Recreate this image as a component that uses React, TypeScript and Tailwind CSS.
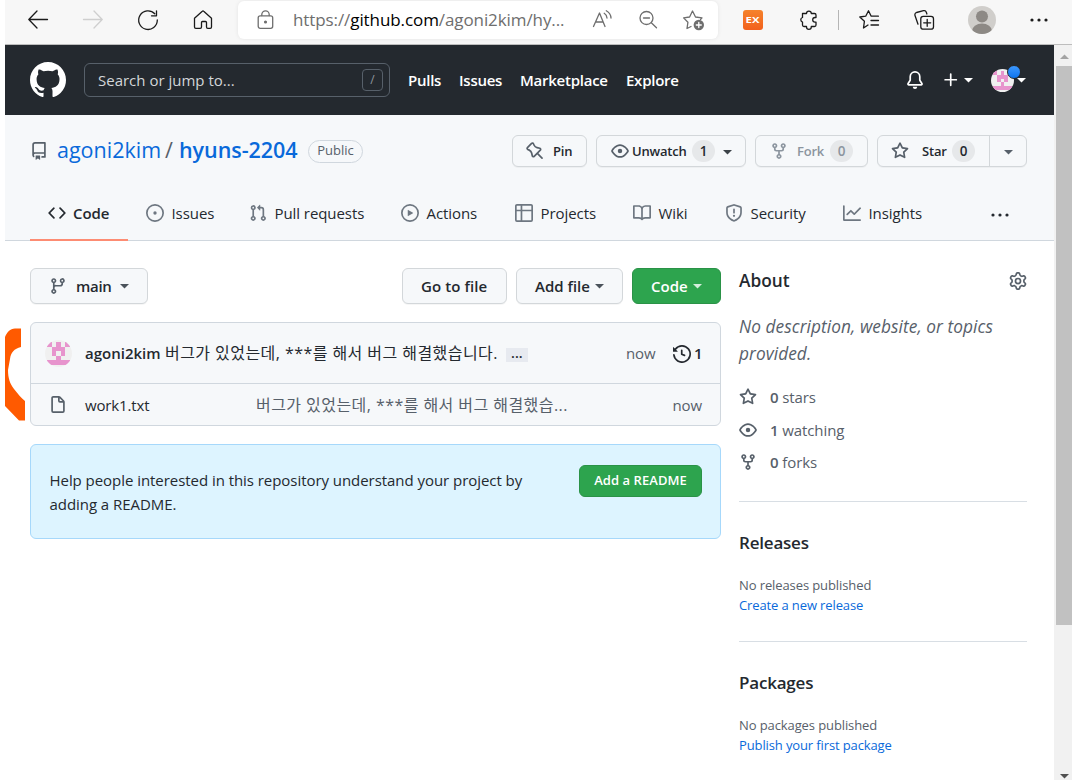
import type { ReactNode } from "react";
import clsx from "clsx";

// 16px octicon outlines
const icons = {
  mark: "M8 0C3.58 0 0 3.58 0 8c0 3.54 2.29 6.53 5.47 7.59.4.07.55-.17.55-.38 0-.19-.01-.82-.01-1.49-2.01.37-2.53-.49-2.69-.94-.09-.23-.48-.94-.82-1.13-.28-.15-.68-.52-.01-.53.63-.01 1.08.58 1.23.82.72 1.21 1.87.87 2.33.66.07-.52.28-.87.51-1.07-1.78-.2-3.64-.89-3.64-3.95 0-.87.31-1.59.82-2.15-.08-.2-.36-1.02.08-2.12 0 0 .67-.21 2.2.82.64-.18 1.32-.27 2-.27.68 0 1.36.09 2 .27 1.53-1.04 2.2-.82 2.2-.82.44 1.1.16 1.92.08 2.12.51.56.82 1.27.82 2.15 0 3.07-1.87 3.75-3.65 3.95.29.25.54.73.54 1.48 0 1.07-.01 1.93-.01 2.2 0 .21.15.46.55.38A8.013 8.013 0 0016 8c0-4.42-3.58-8-8-8z",
  repo: "M2 2.5A2.5 2.5 0 014.5 0h8.75a.75.75 0 01.75.75v12.5a.75.75 0 01-.75.75h-2.5a.75.75 0 110-1.5h1.75v-2h-8a1 1 0 00-.714 1.7.75.75 0 01-1.072 1.05A2.495 2.495 0 012 11.5v-9zm10.5-1V9h-8c-.356 0-.694.074-1 .208V2.5a1 1 0 011-1h8zM5 12.25v3.25a.25.25 0 00.4.2l1.45-1.087a.25.25 0 01.3 0L8.6 15.7a.25.25 0 00.4-.2v-3.25a.25.25 0 00-.25-.25h-3.5a.25.25 0 00-.25.25z",
  code: "M4.72 3.22a.75.75 0 011.06 1.06L2.06 8l3.72 3.72a.75.75 0 11-1.06 1.06L.47 8.53a.75.75 0 010-1.06l4.25-4.25zm6.56 0a.75.75 0 10-1.06 1.06L13.94 8l-3.72 3.72a.75.75 0 101.06 1.06l4.25-4.25a.75.75 0 000-1.06l-4.25-4.25z",
  issue: "M8 9.5a1.5 1.5 0 100-3 1.5 1.5 0 000 3zM8 0a8 8 0 100 16A8 8 0 008 0zM1.5 8a6.5 6.5 0 1113 0 6.5 6.5 0 01-13 0z",
  pull: "M7.177 3.073L9.573.677A.25.25 0 0110 .854v4.792a.25.25 0 01-.427.177L7.177 3.427a.25.25 0 010-.354zM3.75 2.5a.75.75 0 100 1.5.75.75 0 000-1.5zm-2.25.75a2.25 2.25 0 113 2.122v5.256a2.251 2.251 0 11-1.5 0V5.372A2.25 2.25 0 011.5 3.25zM11 2.5h-1V4h1a1 1 0 011 1v5.628a2.251 2.251 0 101.5 0V5A2.5 2.5 0 0011 2.5zm1 10.25a.75.75 0 111.5 0 .75.75 0 01-1.5 0zM3.75 12a.75.75 0 100 1.5.75.75 0 000-1.5z",
  play: "M1.5 8a6.5 6.5 0 1113 0 6.5 6.5 0 01-13 0zM8 0a8 8 0 100 16A8 8 0 008 0zM6.379 5.227A.25.25 0 006 5.442v5.117a.25.25 0 00.379.214l4.264-2.559a.25.25 0 000-.428L6.379 5.227z",
  table: "M0 1.75C0 .784.784 0 1.75 0h12.5C15.216 0 16 .784 16 1.75v3.585a.746.746 0 010 .83v8.085A1.75 1.75 0 0114.25 16H6.309a.748.748 0 01-1.118 0H1.75A1.75 1.75 0 010 14.25V6.165a.746.746 0 010-.83V1.75zM1.5 6.5v7.75c0 .138.112.25.25.25H5v-8H1.5zM5 5H1.5V1.75a.25.25 0 01.25-.25H5V5zm1.5 1.5v8h7.75a.25.25 0 00.25-.25V6.5h-8zm8-1.5h-8V1.5h7.75a.25.25 0 01.25.25V5z",
  book: "M0 1.75A.75.75 0 01.75 1h4.253c1.227 0 2.317.59 3 1.501A3.744 3.744 0 0111.006 1h4.245a.75.75 0 01.75.75v10.5a.75.75 0 01-.75.75h-4.507a2.25 2.25 0 00-1.591.659l-.622.621a.75.75 0 01-1.06 0l-.622-.621A2.25 2.25 0 005.258 13H.75a.75.75 0 01-.75-.75V1.75zm8.755 3a2.25 2.25 0 012.25-2.25H14.5v9h-3.757c-.71 0-1.4.201-1.992.572l.004-7.322zm-1.504 7.324l.004-5.073-.002-2.253A2.25 2.25 0 005.003 2.5H1.5v9h3.757a3.75 3.75 0 011.994.574z",
  shield: "M7.467.133a1.75 1.75 0 011.066 0l5.25 1.68A1.75 1.75 0 0115 3.48V7c0 1.566-.32 3.182-1.303 4.682-.983 1.498-2.585 2.813-5.032 3.855a1.7 1.7 0 01-1.33 0c-2.447-1.042-4.049-2.357-5.032-3.855C1.32 10.182 1 8.566 1 7V3.48a1.75 1.75 0 011.217-1.667l5.25-1.68zm.61 1.429a.25.25 0 00-.153 0l-5.25 1.68a.25.25 0 00-.174.238V7c0 1.358.275 2.666 1.057 3.86.784 1.194 2.121 2.34 4.366 3.297a.2.2 0 00.154 0c2.245-.956 3.582-2.104 4.366-3.298C13.225 9.666 13.5 8.36 13.5 7V3.48a.25.25 0 00-.174-.237l-5.25-1.68zM9 10.5a1 1 0 11-2 0 1 1 0 012 0zm-.25-5.75a.75.75 0 10-1.5 0v3a.75.75 0 001.5 0v-3z",
  graph: "M1.5 1.75a.75.75 0 00-1.5 0v12.5c0 .414.336.75.75.75h14.5a.75.75 0 000-1.5H1.5V1.75zm14.28 2.53a.75.75 0 00-1.06-1.06L10 7.94 7.53 5.47a.75.75 0 00-1.06 0L3.22 8.72a.75.75 0 001.06 1.06L7 7.06l2.47 2.47a.75.75 0 001.06 0l5.25-5.25z",
  eye: "M1.679 7.932c.412-.621 1.242-1.75 2.366-2.717C5.175 4.242 6.527 3.5 8 3.5c1.473 0 2.824.742 3.955 1.715 1.124.967 1.954 2.096 2.366 2.717a.119.119 0 010 .136c-.412.621-1.242 1.75-2.366 2.717C10.825 11.758 9.473 12.5 8 12.5c-1.473 0-2.824-.742-3.955-1.715C2.92 9.818 2.09 8.69 1.679 8.068a.119.119 0 010-.136zM8 2c-1.981 0-3.67.992-4.933 2.078C1.797 5.169.88 6.423.43 7.1a1.619 1.619 0 000 1.798c.45.678 1.367 1.932 2.637 3.024C4.329 13.008 6.019 14 8 14c1.981 0 3.67-.992 4.933-2.078 1.27-1.091 2.187-2.345 2.637-3.023a1.619 1.619 0 000-1.798c-.45-.678-1.367-1.932-2.637-3.023C11.671 2.992 9.981 2 8 2zm0 8a2 2 0 100-4 2 2 0 000 4z",
  fork: "M5 3.25a.75.75 0 11-1.5 0 .75.75 0 011.5 0zm0 2.122a2.25 2.25 0 10-1.5 0v.878A2.25 2.25 0 005.75 8.5h1.5v2.128a2.251 2.251 0 101.5 0V8.5h1.5a2.25 2.25 0 002.25-2.25v-.878a2.25 2.25 0 10-1.5 0v.878a.75.75 0 01-.75.75h-4.5A.75.75 0 015 6.25v-.878zm3.75 7.378a.75.75 0 11-1.5 0 .75.75 0 011.5 0zm3-8.75a.75.75 0 100-1.5.75.75 0 000 1.5z",
  star: "M8 .25a.75.75 0 01.673.418l1.882 3.815 4.21.612a.75.75 0 01.416 1.279l-3.046 2.97.719 4.192a.75.75 0 01-1.088.791L8 12.347l-3.766 1.98a.75.75 0 01-1.088-.79l.72-4.194L.818 6.374a.75.75 0 01.416-1.28l4.21-.611L7.327.668A.75.75 0 018 .25zm0 2.445L6.615 5.5a.75.75 0 01-.564.41l-3.097.45 2.24 2.184a.75.75 0 01.216.664l-.528 3.084 2.769-1.456a.75.75 0 01.698 0l2.77 1.456-.53-3.084a.75.75 0 01.216-.664l2.24-2.183-3.096-.45a.75.75 0 01-.564-.41L8 2.694v.001z",
  branch: "M11.75 2.5a.75.75 0 100 1.5.75.75 0 000-1.5zm-2.25.75a2.25 2.25 0 113 2.122V6A2.5 2.5 0 0110 8.5H6a1 1 0 00-1 1v1.128a2.251 2.251 0 11-1.5 0V5.372a2.25 2.25 0 111.5 0v1.836A2.492 2.492 0 016 7h4a1 1 0 001-1v-.628A2.25 2.25 0 019.5 3.25zM4.25 12a.75.75 0 100 1.5.75.75 0 000-1.5zM3.5 3.25a.75.75 0 111.5 0 .75.75 0 01-1.5 0z",
  file: "M3.75 1.5a.25.25 0 00-.25.25v11.5c0 .138.112.25.25.25h8.5a.25.25 0 00.25-.25V6H9.75A1.75 1.75 0 018 4.25V1.5H3.75zm5.75.56v2.19c0 .138.112.25.25.25h2.19L9.5 2.06zM2 1.75C2 .784 2.784 0 3.75 0h5.086c.464 0 .909.184 1.237.513l3.414 3.414c.329.328.513.773.513 1.237v8.086A1.75 1.75 0 0112.25 15h-8.5A1.75 1.75 0 012 13.25V1.75z",
  history: "M1.643 3.143L.427 1.927A.25.25 0 000 2.104V5.75c0 .138.112.25.25.25h3.646a.25.25 0 00.177-.427L2.715 4.215a6.5 6.5 0 11-1.18 4.458.75.75 0 10-1.493.154 8.001 8.001 0 101.6-5.684zM7.75 4a.75.75 0 01.75.75v2.992l2.028.812a.75.75 0 01-.557 1.392l-2.5-1A.75.75 0 017 8.25v-3.5A.75.75 0 017.75 4z",
  bell: "M8 16a2 2 0 001.985-1.75c.017-.137-.097-.25-.235-.25h-3.5c-.138 0-.252.113-.235.25A2 2 0 008 16zM8 1.5A3.5 3.5 0 004.5 5v2.947c0 .346-.102.683-.294.97l-1.703 2.556a.018.018 0 00-.003.01l.001.006c0 .002.002.004.004.006a.017.017 0 00.006.004l.007.001h10.964l.007-.001a.016.016 0 00.006-.004.016.016 0 00.004-.006l.001-.007a.017.017 0 00-.003-.01l-1.703-2.554a1.75 1.75 0 01-.294-.97V5A3.5 3.5 0 008 1.5zM3 5a5 5 0 0110 0v2.947c0 .05.015.098.042.139l1.703 2.555A1.518 1.518 0 0113.482 13H2.518a1.518 1.518 0 01-1.263-2.36l1.703-2.554A.25.25 0 003 7.947V5z",
  plus: "M7.75 2a.75.75 0 01.75.75V7h4.25a.75.75 0 110 1.5H8.5v4.25a.75.75 0 11-1.5 0V8.5H2.75a.75.75 0 010-1.5H7V2.75A.75.75 0 017.75 2z",
  pin: "M4.456.734a1.75 1.75 0 012.826.504l.613 1.327a3.081 3.081 0 002.084 1.707l2.454.584c1.332.317 1.8 1.972.832 2.94L11.06 10l3.72 3.72a.75.75 0 11-1.061 1.06L10 11.06l-2.204 2.205c-.968.968-2.623.5-2.94-.832l-.584-2.454a3.081 3.081 0 00-1.707-2.084l-1.327-.613a1.75 1.75 0 01-.504-2.826L4.456.734zM5.92 1.866a.25.25 0 00-.404-.072L1.794 5.516a.25.25 0 00.072.404l1.328.613A4.582 4.582 0 015.73 9.63l.584 2.454a.25.25 0 00.42.12l5.47-5.47a.25.25 0 00-.12-.42L9.63 5.73a4.581 4.581 0 01-3.098-2.537L5.92 1.866z",
  gear: "M7.429 1.525a6.593 6.593 0 011.142 0c.036.003.108.036.137.146l.289 1.105c.147.56.55.967.997 1.189.174.086.341.183.501.29.417.278.97.423 1.53.27l1.102-.303c.11-.03.175.016.195.046.219.31.41.641.573.989.014.031.022.11-.059.19l-.815.806c-.411.406-.562.957-.53 1.456a4.588 4.588 0 010 .582c-.032.499.119 1.05.53 1.456l.815.806c.08.08.073.159.059.19a6.494 6.494 0 01-.573.99c-.02.029-.086.074-.195.045l-1.103-.303c-.559-.153-1.112-.008-1.529.27-.16.107-.327.204-.5.29-.449.222-.851.628-.998 1.189l-.289 1.105c-.029.11-.101.143-.137.146a6.613 6.613 0 01-1.142 0c-.036-.003-.108-.037-.137-.146l-.289-1.105c-.147-.56-.55-.967-.997-1.189a4.502 4.502 0 01-.501-.29c-.417-.278-.97-.423-1.53-.27l-1.102.303c-.11.03-.175-.016-.195-.046a6.492 6.492 0 01-.573-.989c-.014-.031-.022-.11.059-.19l.815-.806c.411-.406.562-.957.53-1.456a4.587 4.587 0 010-.582c.032-.499-.119-1.05-.53-1.456l-.815-.806c-.08-.08-.073-.159-.059-.19a6.44 6.44 0 01.573-.99c.02-.029.086-.075.195-.045l1.103.303c.559.153 1.112.008 1.529-.27.16-.107.327-.204.5-.29.449-.222.851-.628.998-1.189l.289-1.105c.029-.11.101-.143.137-.146zM8 0c-.236 0-.47.01-.701.03-.743.065-1.29.615-1.458 1.261l-.29 1.106c-.017.066-.078.158-.211.224a5.994 5.994 0 00-.668.386c-.123.082-.233.09-.3.071L3.27 2.776c-.644-.177-1.392.02-1.82.63a7.977 7.977 0 00-.704 1.217c-.315.675-.111 1.422.363 1.891l.815.806c.05.048.098.147.088.294a6.084 6.084 0 000 .772c.01.147-.038.246-.088.294l-.815.806c-.474.469-.678 1.216-.363 1.891.2.428.436.835.704 1.218.428.609 1.176.806 1.82.63l1.103-.303c.066-.019.176-.011.299.071.213.143.436.272.668.386.133.066.194.158.212.224l.289 1.106c.169.646.715 1.196 1.458 1.26a8.094 8.094 0 001.402 0c.743-.064 1.29-.614 1.458-1.26l.29-1.106c.017-.066.078-.158.211-.224a5.98 5.98 0 00.668-.386c.123-.082.233-.09.3-.071l1.102.302c.644.177 1.392-.02 1.82-.63.268-.382.505-.789.704-1.217.315-.675.111-1.422-.364-1.891l-.814-.806c-.05-.048-.098-.147-.088-.294a6.1 6.1 0 000-.772c-.01-.147.039-.246.088-.294l.814-.806c.475-.469.679-1.216.364-1.891a7.992 7.992 0 00-.704-1.218c-.428-.609-1.176-.806-1.82-.63l-1.103.303c-.066.019-.176.011-.299-.071a5.991 5.991 0 00-.668-.386c-.133-.066-.194-.158-.212-.224L10.16 1.29C9.99.645 9.444.095 8.701.031A8.094 8.094 0 008 0zm1.5 8a1.5 1.5 0 11-3 0 1.5 1.5 0 013 0zM11 8a3 3 0 11-6 0 3 3 0 016 0z",
};

type IconName = keyof typeof icons;

function Icon({ name, className }: { name: IconName; className?: string }) {
  return (
    <svg viewBox="0 0 16 16" fill="currentColor" fillRule="evenodd" className={clsx("shrink-0", className ?? "size-[18px]")}>
      <path d={icons[name]} />
    </svg>
  );
}

// Thin line icons of the browser toolbar, 20x20
function Line({ className, children }: { className?: string; children: ReactNode }) {
  return (
    <svg
      viewBox="0 0 20 20"
      fill="none"
      stroke="currentColor"
      strokeWidth="1.3"
      strokeLinecap="round"
      strokeLinejoin="round"
      className={clsx("size-5 shrink-0 overflow-visible", className)}
    >
      {children}
    </svg>
  );
}

function Caret({ className }: { className?: string }) {
  return (
    <svg viewBox="0 0 9 5" fill="currentColor" className={clsx("h-[5px] w-[9px] shrink-0", className)}>
      <path d="M0 0h9L4.5 4.5z" />
    </svg>
  );
}

function Dots({ className }: { className?: string }) {
  return (
    <svg viewBox="0 0 18 4" fill="currentColor" className={clsx("h-1 w-[18px] shrink-0", className)}>
      <circle cx="2" cy="2" r="1.6" />
      <circle cx="9" cy="2" r="1.6" />
      <circle cx="16" cy="2" r="1.6" />
    </svg>
  );
}

const identicon = ["X.X.X", ".XXX.", ".X.X.", "..X..", "XXXXX"];

function Avatar({ className }: { className?: string }) {
  return (
    <svg viewBox="0 0 6 6" shapeRendering="crispEdges" className={clsx("shrink-0 rounded-full bg-[#f0f0f0]", className)}>
      {identicon.map((row, y) =>
        [...row].map((cell, x) =>
          cell === "X" ? <rect key={`${x}-${y}`} x={x + 0.5} y={y + 0.5} width="1" height="1" fill="#e794cd" /> : null,
        ),
      )}
    </svg>
  );
}

function BrowserBar() {
  return (
    <div className="ml-[5px] flex h-[45px] items-start border-b border-[#bdbdbd] bg-[#f7f7f7] text-[#1b1b1b]">
      <div className="flex h-10 w-full items-center">
        <Line className="ml-[23px]">
          <path d="M19.5 9.500H.8M9 1 .8 9.500 9 18" />
        </Line>
        <Line className="ml-[35px] text-[#cfcfcf]">
          <path d="M.5 9.500h18.700M11 1 19.200 9.500 11 18" />
        </Line>
        <Line className="ml-[35px]">
          <path d="M16.800 3.800A9.300 9.300 0 1 0 19.300 10M18.500.8v5h-5" />
        </Line>
        <Line className="ml-[35px]">
          <path d="M1.500 8.300 9.300 1.200a1 1 0 0 1 1.400 0l7.800 7.100v8.700a1.300 1.300 0 0 1-1.300 1.300h-2.400a1.300 1.300 0 0 1-1.300-1.300v-4.500a1 1 0 0 0-1-1h-3a1 1 0 0 0-1 1v4.500a1.300 1.300 0 0 1-1.300 1.300H2.800a1.300 1.300 0 0 1-1.300-1.300z" />
        </Line>

        <div className="ml-[25px] flex h-[38px] w-[480px] items-center rounded-md bg-white text-[#6e6e6e] shadow-[0_0_4px_rgba(0,0,0,0.08)]">
          <Line className="ml-[18px]">
            <rect x="2.200" y="5.800" width="14.500" height="12.500" rx="2" />
            <path d="M5.800 5.500v-1a3.700 3.700 0 0 1 7.400 0v1" />
            <circle cx="9.500" cy="12" r=".9" fill="currentColor" />
          </Line>
          <div className="ml-[17px] w-[272px] text-[17px] tracking-[-0.09px] whitespace-nowrap">
            https://<span className="text-black">github.com</span>/agoni2kim/hy...
          </div>
          <Line className="ml-[27px]">
            <path d="M1.500 16.500 7.500 3l5.500 13.500M3.600 12h7.600M12.200 3.300c1.600 1 2.600 2.400 2.800 4.700M14.300.8c2.800 1.500 4.500 4 4.700 7.200" />
          </Line>
          <Line className="ml-[27px]">
            <circle cx="7.500" cy="8" r="6.500" />
            <path d="M4.500 8h6M12.300 12.800l5.200 4.900" />
          </Line>
          <Line className="ml-[24px]">
            <path d="m8 16.500-4 2 .9-6.200L.6 7.900l6-.9L9.500 1l3 6 6.500.9-1.500 1.600" />
            <circle cx="15.800" cy="15" r="5.200" fill="#6e6e6e" stroke="none" />
            <path d="M15.800 12.500v5M13.300 15h5" stroke="#fff" />
          </Line>
        </div>

        <div className="ml-[25px] flex size-5 items-center justify-center rounded-[3px] bg-linear-to-b from-[#f5822c] to-[#f2601c] text-[9px] font-bold text-white">
          <span className="scale-x-125">EX</span>
        </div>
        <Line className="ml-[36px]">
          <path d="M3.500 3.500h4a2.400 2.400 0 0 1 4.800 0h3.200a1.500 1.500 0 0 1 1.500 1.500v2.500h-1a2.300 2.300 0 0 0 0 4.600h1V15a1.500 1.500 0 0 1-1.500 1.500h-3.200v.4a2.400 2.400 0 0 1-4.800 0v-.4h-2.500A1.500 1.500 0 0 1 3.500 15v-2.900a2.400 2.400 0 0 1 0-4.600z" />
        </Line>
        <div className="ml-[19px] h-5 w-px bg-[#b5b5b5]" />
        <Line className="ml-[20px]">
          <path d="m9 15-4.500 3 .9-6.700L.8 7l5.900-.8L9.500.8l2.700 5.400h7.200M12 10.500h7.500M12 15h7.500" />
        </Line>
        <Line className="ml-[35px]">
          <rect x="6.800" y="6.300" width="12.700" height="12.900" rx="2.500" />
          <path d="M13.200 9.300v7M9.700 12.800h7M4 14.200 1 5.500a2.300 2.300 0 0 1 1.500-3L9.500.7a2.300 2.300 0 0 1 2.800 1.500l.6 1.800" />
        </Line>
        <svg viewBox="0 0 28 28" className="ml-[34px] size-7 shrink-0 rounded-full bg-[#d0cecb]">
          <circle cx="14" cy="10.500" r="6" fill="#8d8985" />
          <ellipse cx="14" cy="25" rx="10" ry="7.500" fill="#8d8985" />
        </svg>
        <Dots className="ml-[34px]" />
      </div>
    </div>
  );
}

const siteLinks = [
  { label: "Pulls", className: "w-[51px]" },
  { label: "Issues", className: "w-[61px]" },
  { label: "Marketplace", className: "w-[106px]" },
  { label: "Explore", className: "w-[80px]" },
];

function SiteHeader() {
  return (
    <header className="flex h-[70px] items-center bg-[#24292f] text-white">
      <Icon name="mark" className="ml-[25px] size-9" />
      <div className="ml-[18px] flex h-[34px] w-[306px] items-center justify-between rounded-md border border-[#57606a] pr-[6px] pl-[13px] text-[#d3d6d9]">
        <span>Search or jump to...</span>
        <span className="flex h-[22px] w-[21px] items-center justify-center rounded-[4px] border border-[#57606a] text-xs text-[#8f969d]">/</span>
      </div>
      <nav className="ml-[18px] flex font-semibold tracking-[-0.25px]">
        {siteLinks.map((link) => (
          <a key={link.label} className={link.className}>{link.label}</a>
        ))}
      </nav>
      <Icon name="bell" className="ml-[200px] size-[18px]" />
      <Icon name="plus" className="ml-[18px] size-[18px]" />
      <Caret className="ml-[4px]" />
      <div className="relative ml-[18px]">
        <Avatar className="size-[23px]" />
        <span className="absolute -top-[4px] left-[16px] size-[14px] rounded-full border border-[#24292f] bg-linear-to-b from-[#3b98ff] to-[#0a74ee]" />
      </div>
      <Caret className="relative ml-[3px]" />
    </header>
  );
}

const tabs: { icon: IconName; label: string; className: string; active?: boolean }[] = [
  { icon: "code", label: "Code", className: "w-[98px]", active: true },
  { icon: "issue", label: "Issues", className: "w-[103px]" },
  { icon: "pull", label: "Pull requests", className: "w-[152px]" },
  { icon: "play", label: "Actions", className: "w-[114px]" },
  { icon: "table", label: "Projects", className: "w-[118px]" },
  { icon: "book", label: "Wiki", className: "w-[92px]" },
  { icon: "shield", label: "Security", className: "w-[118px]" },
  { icon: "graph", label: "Insights", className: "w-[147px]" },
];

function Count({ children }: { children: ReactNode }) {
  return (
    <span className="flex h-[22px] w-[23px] items-center justify-center rounded-full bg-[#e6e8ea] text-[13.5px]">{children}</span>
  );
}

const smallButton = "flex h-8 items-center rounded-md border border-[#d3d7da] bg-[#f6f8fa] text-[13px] font-semibold tracking-[-0.2px] shadow-[0_1px_0_rgba(27,31,36,0.04)]";

function RepoHeader() {
  return (
    <div className="flex h-[126px] flex-col justify-between border-b border-[#d0d7de] bg-[#f6f8fa]">
      <div className="mt-5 mr-[27px] ml-[25px] flex items-center">
        <Icon name="repo" className="size-[18px] text-[#57606a]" />
        <h1 className="mb-[2px] ml-[9px] flex w-[251px] text-[21.5px] leading-[30px] whitespace-nowrap text-[#0969da]">
          <span className="w-[108px]">agoni2kim</span>
          <span className="w-[14px] text-[#57606a]">/</span>
          <span className="font-semibold tracking-[-0.05px]">hyuns-2204</span>
        </h1>
        <span className="flex h-[23px] w-[55px] items-center justify-center rounded-full border border-[#d0d7de] text-[13px] font-medium text-[#57606a]">
          Public
        </span>
        <div className="ml-auto flex gap-[9px]">
          <button className={clsx(smallButton, "w-[75px] pl-[13px]")}>
            <Icon name="pin" className="size-[18px] text-[#57606a]" />
            <span className="ml-[9px] pt-px">Pin</span>
          </button>
          <button className={clsx(smallButton, "w-[150px] pl-[14px]")}>
            <Icon name="eye" className="size-[18px] text-[#57606a]" />
            <span className="ml-[3px] w-[60px] pt-px text-left">Unwatch</span>
            <Count>1</Count>
            <Caret className="mt-[2px] ml-[8px] text-[#3c4248]" />
          </button>
          <button className={clsx(smallButton, "w-[113px] pl-[14px] text-[#8c959f]")}>
            <Icon name="fork" />
            <span className="ml-[9px] w-[33px] pt-px text-left">Fork</span>
            <Count>0</Count>
          </button>
          <div className={clsx(smallButton, "w-[150px] pl-[13px]")}>
            <Icon name="star" className="size-[18px] text-[#57606a]" />
            <span className="ml-[13px] w-[30px] pt-px">Star</span>
            <Count>0</Count>
            <span className="ml-[14px] flex h-full flex-1 items-center justify-center border-l border-[#d3d7da]">
              <Caret className="mt-[2px] text-[#57606a]" />
            </span>
          </div>
        </div>
      </div>
      <nav className="-mb-px ml-[25px] flex">
        {tabs.map((tab) => (
          <a key={tab.label} className={clsx("flex h-[55px] items-start border-b-2 pl-[18px]", tab.className, tab.active ? "border-[#fd8c73]" : "border-transparent")}>
            <span className={clsx("flex h-[54px] items-center whitespace-nowrap", tab.active ? "gap-[7px]" : "gap-[7.5px]")}>
              <Icon name={tab.icon} className={clsx("size-[18px]", tab.active ? "text-[#24292f]" : "text-[#6e7781]")} />
              <span className={tab.active ? "font-semibold tracking-[-0.05px]" : "tracking-[-0.07px]"}>{tab.label}</span>
            </span>
          </a>
        ))}
        <Dots className="mt-[27px] ml-[19px]" />
      </nav>
    </div>
  );
}

const mediumButton = "flex h-9 items-center rounded-md border border-[#d3d7da] bg-[#f6f8fa] pl-[18px] font-semibold whitespace-nowrap shadow-[0_1px_0_rgba(27,31,36,0.04)]";

function Files() {
  return (
    <main className="w-[691px]">
      <div className="flex">
        <button className={clsx(mediumButton, "mr-auto w-[118px]")}>
          <Icon name="branch" className="size-[18px] text-[#57606a]" />
          <span className="ml-[9px] w-[44px] text-left tracking-[-0.3px]">main</span>
          <Caret className="text-[#4b535b]" />
        </button>
        <button className={clsx(mediumButton, "w-[105px] tracking-[0.1px]")}>Go to file</button>
        <button className={clsx(mediumButton, "ml-[9px] w-[107px]")}>
          <span className="w-[60px] text-left">Add file</span>
          <Caret className="text-[#4b535b]" />
        </button>
        <button className="ml-[9px] flex h-9 w-[89px] items-center rounded-md border border-[#2a9247] bg-[#2da44e] pl-[18px] font-semibold text-white">
          <span className="w-[42px] text-left">Code</span>
          <Caret className="text-[#d5eddc]" />
        </button>
      </div>

      <div className="mt-[18px] h-[104px] rounded-md border border-[#d0d7de] bg-[#f6f8fa] whitespace-nowrap">
        <div className="flex h-[61px] items-center border-b border-[#d0d7de] pr-[18px] pl-[14px]">
          <Avatar className="size-[27px]" />
          <span className="ml-[13px] w-[80px] font-semibold tracking-[0px]">agoni2kim</span>
          <span className="text-[16px] tracking-[0.44px]">버그가 있었는데, ***를 해서 버그 해결했습니다.</span>
          <span className="mt-[3px] ml-[8px] flex h-[14px] w-[22px] items-center justify-center bg-[#e7eaf0] pb-[3px] text-sm font-semibold">...</span>
          <span className="ml-auto w-[47px] tracking-[-0.1px] text-[#57606a]">now</span>
          <Icon name="history" className="mt-px size-[18px]" />
          <span className="ml-[3px] w-[8px] font-semibold">1</span>
        </div>
        <div className="flex h-[42px] items-center pr-[18px] pl-[18px]">
          <Icon name="file" className="size-[18px] text-[#57606a]" />
          <span className="ml-[18px] w-[171px] tracking-[-0.15px]">work1.txt</span>
          <span className="w-[320px] text-[16px] tracking-[0.44px] text-[#57606a]">버그가 있었는데, ***를 해서 버그 해결했습...</span>
          <span className="ml-auto tracking-[-0.1px] text-[#57606a]">now</span>
        </div>
      </div>

      <div className="mt-[18px] flex h-[95px] items-start justify-between rounded-md border border-[#a6d8fb] bg-[#ddf4ff] pt-[20px] pr-[18px] pl-[18.500px]">
        <p className="mt-[3px] w-[490px] leading-6 tracking-[-0.05px]">
          Help people interested in this repository understand your project by
          <br />
          adding a README.
        </p>
        <button className="h-8 w-[123px] rounded-md border border-[#2a9247] bg-[#2da44e] text-[13px] font-semibold tracking-[0.05px] text-white">
          Add a README
        </button>
      </div>
    </main>
  );
}

const stats: { icon: IconName; count: number; label: string }[] = [
  { icon: "star", count: 0, label: "stars" },
  { icon: "eye", count: 1, label: "watching" },
  { icon: "fork", count: 0, label: "forks" },
];

function SideSection({ title, note, link }: { title: string; note: string; link: string }) {
  return (
    <section className="h-[140px] border-t border-[#d8dee4] pt-[27px]">
      <h2 className="text-[17px] leading-[27px] font-semibold tracking-[-0.2px]">{title}</h2>
      <p className="mt-[19px] text-[13px] leading-5 tracking-[-0.1px] text-[#57606a]">{note}</p>
      <a className="block text-[13px] leading-[21px] tracking-[-0.12px] text-[#0969da]">{link}</a>
    </section>
  );
}

function Sidebar() {
  return (
    <aside className="ml-[18px] w-[288px]">
      <div className="-mt-px flex h-[27px] items-center justify-between">
        <h2 className="text-[17.3px] font-semibold tracking-[0px]">About</h2>
        <Icon name="gear" className="size-[18px] text-[#57606a]" />
      </div>
      <p className="mt-[19px] text-[17.3px] leading-[27px] tracking-[0.06px] text-[#57606a] italic">
        No description, website, or topics
        <br />
        provided.
      </p>
      <ul className="mt-[14px] text-[#57606a]">
        {stats.map((stat) => (
          <li key={stat.icon} className="flex h-[32.500px] items-center">
            <Icon name={stat.icon} className="size-[18px]" />
            <span className="ml-[13px] tracking-[-0.1px]">
              <strong className="font-semibold">{stat.count}</strong> {stat.label}
            </span>
          </li>
        ))}
      </ul>
      <div className="mt-[22px]">
        <SideSection title="Releases" note="No releases published" link="Create a new release" />
        <SideSection title="Packages" note="No packages published" link="Publish your first package" />
      </div>
    </aside>
  );
}

function Scrollbar() {
  return (
    <div className="flex w-[18px] flex-col items-end bg-[#f1f1f1]">
      <div className="flex h-[21px] w-4 items-center justify-center">
        <Caret className="mt-[2px] rotate-180 text-[#a3a3a3]" />
      </div>
      <div className="h-[559px] w-4 bg-[#c1c1c1]" />
      <div className="mt-auto flex h-[9px] w-4 justify-center">
        <Caret className="mt-[3px] text-[#505050]" />
      </div>
    </div>
  );
}

export default function App() {
  return (
    <div className="h-[780px] w-[1072px] overflow-hidden bg-white font-['Open_Sans','Noto_Sans_CJK_KR',sans-serif] text-[15px] text-[#24292f]">
      <BrowserBar />
      <div className="ml-[5px] flex h-[735px]">
        <div className="relative w-[1049px]">
          <SiteHeader />
          <RepoHeader />
          <div className="flex pt-[27px] pl-[25px]">
            <Files />
            <Sidebar />
          </div>
          {/* marker stroke left of the file list */}
          <svg viewBox="0 0 20 93" className="absolute top-[283px] left-0 h-[93px] w-5">
            <path d="M16 .5v18.500C9 21 6 24 5 31L3 42c0 8 2 14 6 19s7 9 11 12v19.500h-6L0 78V9C2 4 5 1 10 .5z" fill="#ff5a00" />
          </svg>
        </div>
        <Scrollbar />
      </div>
    </div>
  );
}
